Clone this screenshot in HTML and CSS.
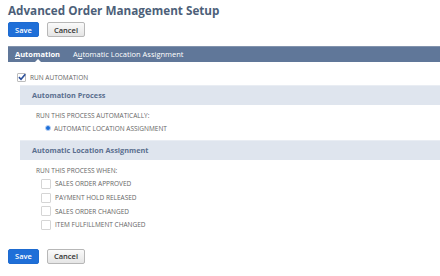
FILE: index.html
```html
<!DOCTYPE html>
<html lang="en">
<head>
    <meta charset="UTF-8">
    <meta name="viewport" content="width=device-width, initial-scale=1.0">
    <title>Advanced Order Management Setup</title>
    <link rel="stylesheet" href="styles.css">
</head>
<body>
    <div class="setup">
        <h1 class="setup__title">Advanced Order Management Setup</h1>
        <div class="setup__actions">
            <button class="btn btn--primary">Save</button>
            <button class="btn">Cancel</button>
        </div>
        <div class="tabs">
            <span class="tabs__item tabs__item--active"><u>A</u>utomation</span>
            <span class="tabs__item">A<u>u</u>tomatic Location Assignment</span>
        </div>
        <div class="panel">
            <label class="check check--main">
                <span class="check__box check__box--on">
                    <svg width="9" height="8" viewBox="0 0 9 8"><path d="M1 4.2 L3.4 6.6 L8.2 1" fill="none" stroke="#2b4f9a" stroke-width="1.8"/></svg>
                </span>
                RUN AUTOMATION
            </label>
            <div class="group">
                <div class="group__title">Automation Process</div>
                <div class="group__body">
                    <div class="group__label">RUN THIS PROCESS AUTOMATICALLY:</div>
                    <label class="radio"><span class="radio__dot"></span>AUTOMATIC LOCATION ASSIGNMENT</label>
                </div>
            </div>
            <div class="group">
                <div class="group__title">Automatic Location Assignment</div>
                <div class="group__body">
                    <div class="group__label">RUN THIS PROCESS WHEN:</div>
                    <label class="check"><span class="check__box"></span>SALES ORDER APPROVED</label>
                    <label class="check"><span class="check__box"></span>PAYMENT HOLD RELEASED</label>
                    <label class="check"><span class="check__box"></span>SALES ORDER CHANGED</label>
                    <label class="check"><span class="check__box"></span>ITEM FULFILLMENT CHANGED</label>
                </div>
            </div>
        </div>
        <div class="setup__actions setup__actions--bottom">
            <button class="btn btn--primary">Save</button>
            <button class="btn">Cancel</button>
        </div>
    </div>
</body>
</html>
```

FILE: styles.css
```css
body {
    margin: 0;
    background: #fff;
    font-family: "Open Sans", "Liberation Sans", sans-serif;
}
.setup {
    padding: 1px 0 0 8px;
}
.setup .setup__title {
    margin: 0;
    font-size: 11.7px;
    line-height: 18px;
    font-weight: 700;
    color: #4d5f79;
}
.setup .setup__actions {
    display: flex;
    gap: 8px;
    margin-top: 3px;
}
.setup .setup__actions--bottom {
    margin-top: 11px;
}
.btn {
    height: 15px;
    padding: 0 6px;
    border: 1px solid #b7b7b7;
    border-radius: 2px;
    font-family: inherit;
    font-size: 7.5px;
    font-weight: 600;
    color: #333;
    background: linear-gradient(#fafafa, #e5e5e5);
}
.btn.btn--primary {
    width: 31px;
    padding: 0;
    border-color: #1e6bd0;
    color: #fff;
    background: #1f6fd8;
}
.tabs {
    display: flex;
    align-items: center;
    gap: 13px;
    height: 15px;
    margin-top: 9px;
    padding-left: 7px;
    border-top: 1px solid #8293ad;
    background: #607799;
    font-size: 7.5px;
    color: #fff;
}
.tabs .tabs__item {
    position: relative;
    line-height: 15px;
}
.tabs .tabs__item--active {
    font-weight: 700;
}
.tabs .tabs__item--active::after {
    content: "";
    position: absolute;
    left: 50%;
    bottom: 0;
    margin-left: -3px;
    border: 3px solid transparent;
    border-bottom-color: #fff;
    border-top-width: 0;
}
.tabs u {
    text-underline-offset: 1px;
}
.panel {
    padding-top: 9px;
    padding-left: 12px;
    color: #666;
    font-size: 6.5px;
}
.check {
    display: flex;
    align-items: center;
    gap: 4px;
    height: 13.7px;
    padding-left: 5px;
}
.check.check--main {
    padding-left: 0;
    margin-left: -3px;
    height: 12px;
    gap: 4px;
}
.check .check__box {
    display: flex;
    align-items: center;
    justify-content: center;
    width: 8px;
    height: 8px;
    border: 1px solid #d5d5d5;
    border-radius: 1px;
    background: #fff;
}
.check .check__box--on {
    width: 7px;
    height: 7px;
    border-color: #bdbdbd;
}
.check .check__box--on svg {
    margin: -1px -1px 0 0;
}
.group {
    margin-top: 2px;
}
.group .group__title {
    height: 19px;
    padding-left: 12px;
    line-height: 19px;
    border-top: 1px solid #e9edf3;
    background: #dfe5ee;
    font-size: 7.3px;
    font-weight: 700;
    color: #5b6f8f;
}
.group .group__body {
    padding: 6px 0 6px 16px;
}
.group .group__label {
    height: 10px;
    line-height: 10px;
    margin-bottom: 1px;
}
.group + .group {
    margin-top: 0;
}
.radio {
    display: flex;
    align-items: center;
    gap: 3px;
    height: 12px;
    padding-left: 9px;
}
.radio .radio__dot {
    width: 4px;
    height: 4px;
    border-radius: 50%;
    border: 1.5px solid #bcd3f5;
    background: #1b6ed8;
}
```
